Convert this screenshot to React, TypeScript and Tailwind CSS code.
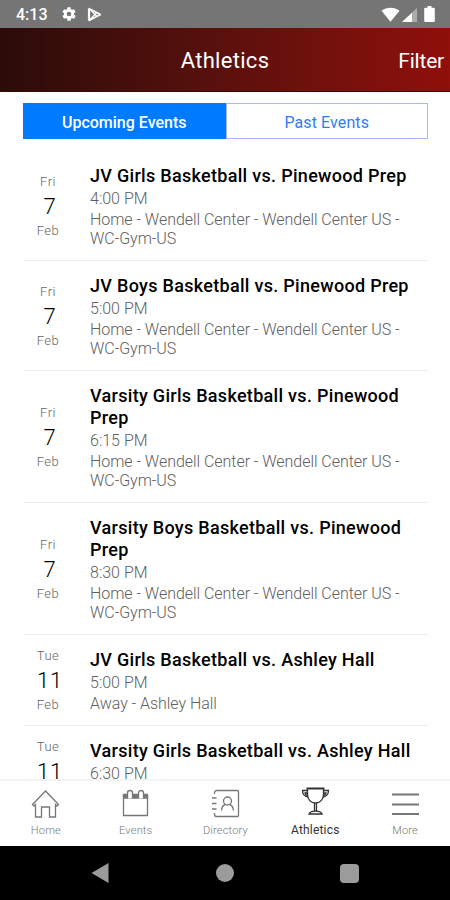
interface SportsEvent {
  weekday: string
  day: string
  month: string
  title: string
  time: string
  location: string
}

const GYM = 'Home - Wendell Center - Wendell Center US - WC-Gym-US'

const events: SportsEvent[] = [
  { weekday: 'Fri', day: '7', month: 'Feb', title: 'JV Girls Basketball vs. Pinewood Prep', time: '4:00 PM', location: GYM },
  { weekday: 'Fri', day: '7', month: 'Feb', title: 'JV Boys Basketball vs. Pinewood Prep', time: '5:00 PM', location: GYM },
  { weekday: 'Fri', day: '7', month: 'Feb', title: 'Varsity Girls Basketball vs. Pinewood Prep', time: '6:15 PM', location: GYM },
  { weekday: 'Fri', day: '7', month: 'Feb', title: 'Varsity Boys Basketball vs. Pinewood Prep', time: '8:30 PM', location: GYM },
  { weekday: 'Tue', day: '11', month: 'Feb', title: 'JV Girls Basketball vs. Ashley Hall', time: '5:00 PM', location: 'Away - Ashley Hall' },
  { weekday: 'Tue', day: '11', month: 'Feb', title: 'Varsity Girls Basketball vs. Ashley Hall', time: '6:30 PM', location: 'Away - Ashley Hall' },
]

function StatusBar() {
  return (
    <div className="flex h-7 shrink-0 items-center bg-[#757575] pl-4 pr-[15px] text-white">
      <span className="w-[45px] pt-0.5 text-[16px] font-medium leading-6">4:13</span>
      <svg className="h-4 w-4" viewBox="0 0 24 24" fill="currentColor">
        <path d="M19.4 13a7.500 7.500 0 0 0 0-2l2.200-1.700a.5.5 0 0 0 .1-.6l-2-3.500a.5.5 0 0 0-.6-.2l-2.600 1a7.700 7.700 0 0 0-1.700-1l-.4-2.700A.5.5 0 0 0 14 2h-4a.5.5 0 0 0-.5.4L9.200 5a8 8 0 0 0-1.700 1l-2.600-1a.5.5 0 0 0-.6.200l-2 3.500a.5.5 0 0 0 .1.600L4.600 11a7.500 7.500 0 0 0 0 2l-2.200 1.700a.5.5 0 0 0-.1.600l2 3.500c.1.200.4.300.6.200l2.600-1a7.700 7.700 0 0 0 1.700 1l.4 2.600c0 .2.200.4.500.4h4c.2 0 .5-.2.500-.4l.4-2.600a8 8 0 0 0 1.700-1l2.600 1c.2.100.5 0 .6-.2l2-3.500a.5.5 0 0 0-.1-.6zM12 15.500a3.500 3.500 0 1 1 0-7 3.500 3.500 0 0 1 0 7z" />
      </svg>
      <svg className="ml-2.5 h-[15px] w-[15px]" viewBox="0 0 15 15" fill="none" stroke="currentColor">
        <path d="M2 1.500v12L13.500 7.500z" strokeWidth="1.500" strokeLinejoin="round" />
        <path d="M2 1.500l8 8M2 13.500l8-8" strokeWidth="1.300" />
        <path d="M2 2v11" strokeWidth="2.200" />
      </svg>
      <div className="ml-auto flex items-center">
        <svg className="h-[15px] w-[19px]" viewBox="0 0 19 15" fill="currentColor">
          <path d="M.5 3.800C5.500-.4 13.500-.4 18.500 3.800L9.500 14.800z" />
        </svg>
        <svg className="ml-0.5 h-[15px] w-[15px]" viewBox="0 0 15 15" fill="currentColor">
          <path d="M15 1v14H0z" opacity=".4" />
          <path d="M10 5.700V15H0z" />
        </svg>
        <svg className="ml-[7px] h-4 w-[11px]" viewBox="0 0 11 16" fill="currentColor">
          <path d="M3.500 0h4v1.700H9.500a1.300 1.300 0 0 1 1.300 1.300v11.700A1.300 1.300 0 0 1 9.500 16h-8A1.300 1.300 0 0 1 .2 14.700V3a1.300 1.300 0 0 1 1.300-1.300h2z" />
        </svg>
      </div>
    </div>
  )
}

function Header() {
  return (
    <header className="grid h-16 shrink-0 grid-cols-[1fr_auto_1fr] items-center border-b border-[#3a0a06] bg-gradient-to-r from-[#2b0b09] to-[#900f0a] pr-[6px] pt-[3px] text-white">
      <span />
      <h1 className="pl-1.5 text-[22px] leading-7 tracking-[0.3px]">Athletics</h1>
      <button className="justify-self-end text-[21px] leading-7 tracking-[-0.2px]">Filter</button>
    </header>
  )
}

function EventRow({ event }: { event: SportsEvent }) {
  return (
    <li className="flex items-center border-b border-[#ececec] pb-[11px] pt-[14px]">
      <div className="-mb-[7px] -mt-[9px] flex w-[50px] shrink-0 flex-col items-center text-[13px] font-light leading-[18px] tracking-[0.5px] text-[#666]">
        <span>{event.weekday}</span>
        <span className="pb-0.5 pl-1 pt-[3px] text-[22px] font-light leading-[26px] tracking-[0.8px] text-black">{event.day}</span>
        <span>{event.month}</span>
      </div>
      <div className="ml-[17px] min-w-0 flex-1">
        <h2 className="text-[18px] font-medium leading-[22px] tracking-[0.3px] text-black">{event.title}</h2>
        <p className="pb-px text-[16px] font-light leading-[23px] text-[#606060]">{event.time}</p>
        <p className="-mt-px pb-px text-[16px] font-light leading-[19px] tracking-[-0.04px] text-[#606060]">{event.location}</p>
      </div>
    </li>
  )
}

const icons = {
  home: (
    <path d="M1.500 15.500L14.500 2l13 13.500-1.500 1.500-1.500-1.500V28h-6V18h-8v10h-6V15.500L3 17z" />
  ),
  events: (
    <>
      <path d="M2.500 7h24v19.500h-24z" />
      <path d="M2.500 5.500h24v3.500h-24z" fill="#777" />
      <path d="M6.500 9.500V4a2.400 2.400 0 0 1 5 0v5.500M17.500 9.500V4a2.400 2.400 0 0 1 5 0v5.500" fill="#fff" />
    </>
  ),
  directory: (
    <>
      <path d="M3.500 5V3.500a2 2 0 0 1 2-2h21a1 1 0 0 1 1 1v24a1 1 0 0 1-1 1h-21a2 2 0 0 1-2-2V24" />
      <path d="M1 9h4.500M1 14.500h4.500M1 20h4.500" />
      <circle cx="16.500" cy="12" r="4" />
      <path d="M10.500 21.500c.3-3.500 1.500-5.500 4-6M18.500 15.500c2.200.5 3.600 2.500 4 6" />
    </>
  ),
  athletics: (
    <>
      <path d="M5.500 1.500h18" strokeWidth="2" />
      <path d="M6.500 2v5.500c0 5 3.500 8.500 8 8.500s8-3.500 8-8.500V2" />
      <path d="M6 3.500H1.500c0 4 2 6 5.500 6.500M6.500 6H4c.3 1.200 1 2 2.500 2.500M23 3.500h4.500c0 4-2 6-5.500 6.500M22.500 6H25c-.3 1.200-1 2-2.500 2.500" />
      <path d="M13.500 16v8M15.500 16v8M8 27c.8-1.800 3-2.800 6.500-2.800s5.700 1 6.500 2.800z" />
    </>
  ),
  more: <path d="M1 5.500h27M1 15.500h27M1 25h27" strokeWidth="2" />,
}

const tabs = [
  { icon: icons.home, label: 'Home' },
  { icon: icons.events, label: 'Events' },
  { icon: icons.directory, label: 'Directory' },
  { icon: icons.athletics, label: 'Athletics', active: true },
  { icon: icons.more, label: 'More' },
]

function TabBar() {
  return (
    <nav className="grid h-[67px] shrink-0 grid-cols-5 border-t-2 border-[#f3f3f3] bg-white pb-0.5 pl-px">
      {tabs.map((tab) => (
        <button
          key={tab.label}
          className={`flex flex-col items-center ${tab.active ? 'pt-[6px] text-[#333]' : 'pt-[8px] text-[#777]'}`}
        >
          <svg className="h-[29px] w-[29px]" viewBox="0 0 29 29" fill="none" stroke="currentColor" strokeWidth="1.300">
            {tab.icon}
          </svg>
          <span className={`leading-4 ${tab.active ? 'mt-[5px] pt-px text-[12px] tracking-[0.2px]' : 'mt-1 pt-px text-[11px] font-light tracking-[0.2px]'}`}>
            {tab.label}
          </span>
        </button>
      ))}
    </nav>
  )
}

function NavigationBar() {
  return (
    <div className="grid h-[54px] shrink-0 grid-cols-[1fr_auto_1fr] items-center bg-black">
      <svg className="ml-[91px] h-5 w-[18px]" viewBox="0 0 18 20" fill="#9b9b9b">
        <path d="M17.500 0v20L.5 10z" />
      </svg>
      <span className="h-[18px] w-[18px] rounded-full bg-[#9b9b9b]" />
      <span className="ml-[106px] h-[19px] w-[19px] rounded-sm bg-[#9b9b9b]" />
    </div>
  )
}

export default function App() {
  return (
    <div className="flex h-[900px] w-[450px] flex-col overflow-hidden bg-white font-['Roboto',sans-serif]">
      <StatusBar />
      <Header />
      <main className="min-h-0 flex-1 overflow-hidden pl-[23px] pr-[22px] pt-[11px]">
        <div className="grid h-9 grid-cols-2 text-[16px]">
          <button className="bg-[#007aff] pt-[3px] font-medium text-white">Upcoming Events</button>
          <button className="border border-[#a9b9fb] pt-[3px] tracking-[0.1px] text-[#2f7df6]">Past Events</button>
        </div>
        <ul className="mt-3">
          {events.map((event) => (
            <EventRow key={event.title} event={event} />
          ))}
        </ul>
      </main>
      <TabBar />
      <NavigationBar />
    </div>
  )
}
